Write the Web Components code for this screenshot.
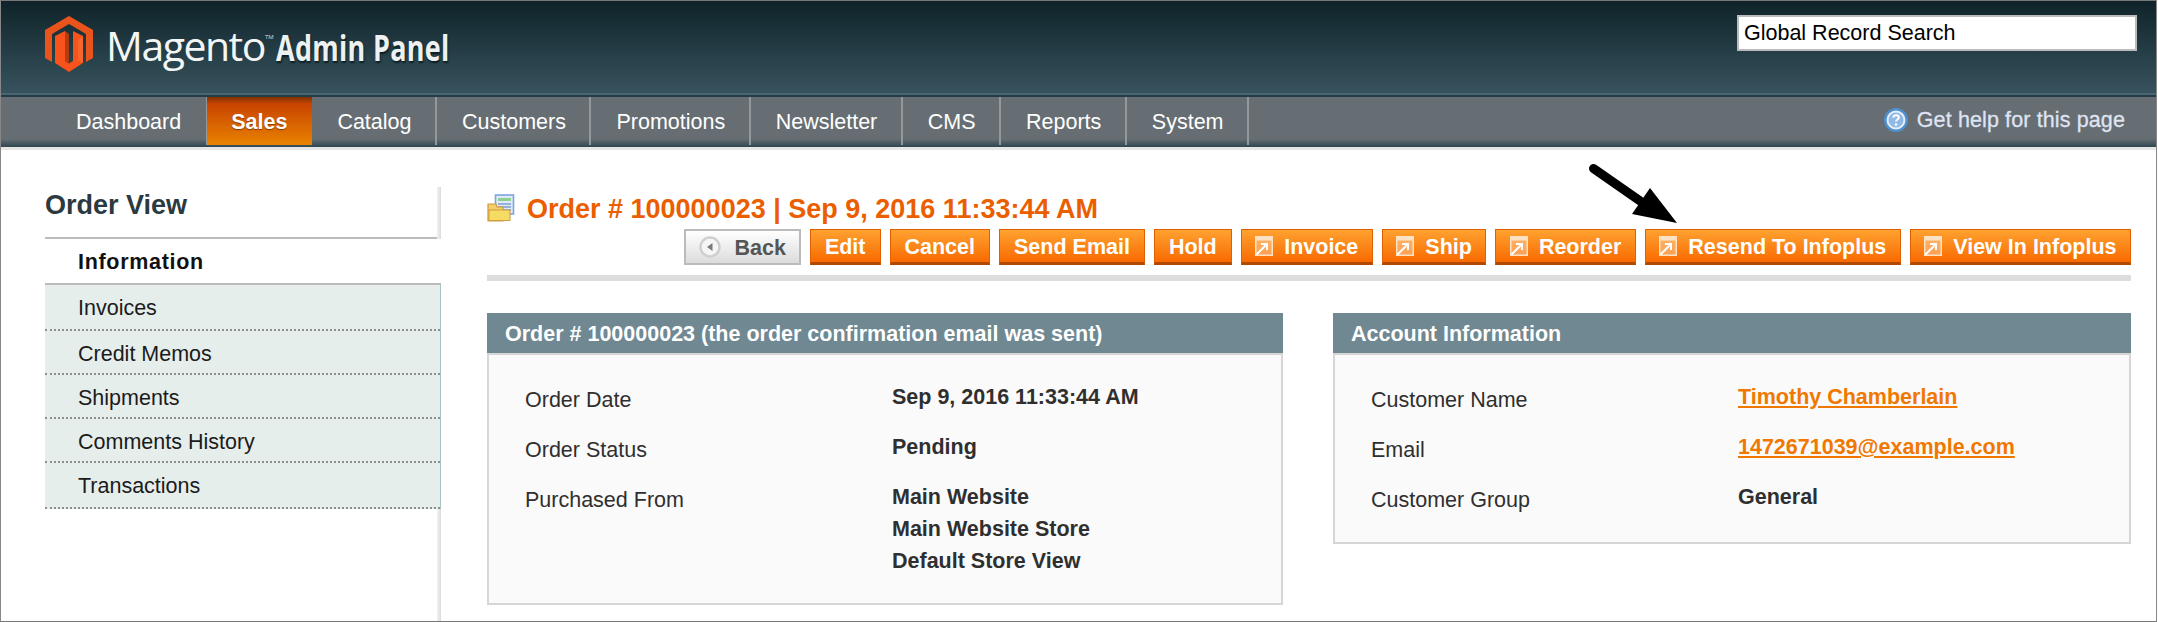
<!DOCTYPE html>
<html>
<head>
<meta charset="utf-8">
<title>Magento Admin Panel</title>
<style>
  html, body { margin: 0; padding: 0; background: #fff; }
  body { font-family: "Liberation Sans", Arial, sans-serif; font-size: 21.5px; }
</style>
</head>
<body>
<admin-shell>
  <admin-header slot="header"></admin-header>
  <admin-nav slot="nav">
    <nav-item>Dashboard</nav-item>
    <nav-item active>Sales</nav-item>
    <nav-item>Catalog</nav-item>
    <nav-item>Customers</nav-item>
    <nav-item>Promotions</nav-item>
    <nav-item>Newsletter</nav-item>
    <nav-item>CMS</nav-item>
    <nav-item>Reports</nav-item>
    <nav-item>System</nav-item>
  </admin-nav>
  <side-tabs slot="side" heading="Order View" active="Information" items="Invoices,Credit Memos,Shipments,Comments History,Transactions"></side-tabs>
  <order-head slot="main" heading="Order # 100000023 | Sep 9, 2016 11:33:44 AM">
    <mage-btn kind="back">Back</mage-btn>
    <mage-btn>Edit</mage-btn>
    <mage-btn>Cancel</mage-btn>
    <mage-btn>Send Email</mage-btn>
    <mage-btn>Hold</mage-btn>
    <mage-btn icon>Invoice</mage-btn>
    <mage-btn icon>Ship</mage-btn>
    <mage-btn icon>Reorder</mage-btn>
    <mage-btn icon>Resend To Infoplus</mage-btn>
    <mage-btn icon>View In Infoplus</mage-btn>
  </order-head>
  <box-grid slot="main">
    <info-box heading="Order # 100000023 (the order confirmation email was sent)">
      <info-row label="Order Date">Sep 9, 2016 11:33:44 AM</info-row>
      <info-row label="Order Status">Pending</info-row>
      <info-row label="Purchased From">Main Website<br>Main Website Store<br>Default Store View</info-row>
    </info-box>
    <info-box heading="Account Information">
      <info-row label="Customer Name"><a href="#" style="color:#f07800">Timothy Chamberlain</a></info-row>
      <info-row label="Email"><a href="#" style="color:#f07800">1472671039@example.com</a></info-row>
      <info-row label="Customer Group">General</info-row>
    </info-box>
  </box-grid>
</admin-shell>

<script>
class AdminShell extends HTMLElement {
  constructor() {
    super();
    this.attachShadow({ mode: 'open' });
  }

  connectedCallback() {
    this.shadowRoot.innerHTML = `
      <style>
        :host {
          display: block;
          position: relative;
          box-sizing: border-box;
          width: 2157px;
          height: 622px;
          overflow: hidden;
          background: #fff;
          border-top: 1px solid #777;
          border-left: 1px solid #888;
          border-right: 1px solid #888;
          border-bottom: 1px solid #777;
        }
        .content {
          display: grid;
          grid-template-columns: 396px 1644px;
          column-gap: 46px;
          padding: 37px 0 0 44px;
        }
        .arrow {
          position: absolute;
          left: 1580px;
          top: 155px;
        }
      </style>
      <slot name="header"></slot>
      <slot name="nav"></slot>
      <div class="content">
        <div><slot name="side"></slot></div>
        <div><slot name="main"></slot></div>
      </div>
      <svg class="arrow" width="110" height="80" viewBox="0 0 110 80">
        <path d="M12.5 12.5 L62 47" stroke="#000" stroke-width="9" stroke-linecap="round" fill="none"/>
        <path d="M96 67 L69 32 L51 58 Z" fill="#000"/>
      </svg>
    `;
  }
}

class AdminHeader extends HTMLElement {
  constructor() {
    super();
    this.attachShadow({ mode: 'open' });
  }

  connectedCallback() {
    this.shadowRoot.innerHTML = `
      <style>
        :host {
          display: flex;
          justify-content: space-between;
          height: 92px;
          background: linear-gradient(#0f2329, #37535e);
        }
        .brand {
          display: flex;
          align-items: flex-start;
          padding: 15px 0 0 44px;
        }
        .brand svg { display: block; margin-right: 13px; }
        .magento {
          margin-top: -7px;
          font-family: "Open Sans", sans-serif;
          font-size: 41px;
          line-height: 56px;
          letter-spacing: -1.5px;
          color: #f4f6f6;
        }
        .tm {
          font-size: 6px;
          vertical-align: 22px;
          letter-spacing: 0;
          margin-right: 2px;
          color: #d8dcdd;
        }
        .panel {
          display: inline-block;
          font-family: "Open Sans", sans-serif;
          font-weight: 700;
          font-size: 35px;
          line-height: 56px;
          color: #eef1f1;
          text-shadow: 1px 2px 2px #0c1d22;
          transform: scaleX(.77);
          transform-origin: left center;
          letter-spacing: .4px;
        }
        .search {
          box-sizing: border-box;
          width: 400px;
          height: 36px;
          margin: 14px 19px 0 0;
          padding: 0 5px;
          border: 2px solid #bbb;
          background: #fff;
          color: #000;
          line-height: 32px;
          font-size: 21.5px;
        }
      </style>
      <div class="brand">
        <svg width="48" height="56" viewBox="0 0 48 56">
          <path fill="#e9541c" d="M24 0 L48 14 V42 L41 46 V18 L24 8 L7 18 V46 L0 42 V14 Z"/>
          <path fill="#f7531a" d="M10 20 L20 15 V45 L24 47.5 L28 45 V15 L38 20 V47 L24 56 L10 47 Z"/>
          <path fill="#b53c12" d="M20 15 L24 18 V47.5 L20 45 Z"/>
          <path fill="#f78a5a" d="M38 20 L33 24 V44 L38 47 Z" opacity=".35"/>
        </svg>
        <div class="magento">Magento<span class="tm">TM</span><span class="panel">Admin Panel</span></div>
      </div>
      <div class="search">Global Record Search</div>
    `;
  }
}

class AdminNav extends HTMLElement {
  constructor() {
    super();
    this.attachShadow({ mode: 'open' });
  }

  connectedCallback() {
    this.shadowRoot.innerHTML = `
      <style>
        :host {
          display: flex;
          justify-content: space-between;
          box-sizing: border-box;
          height: 57px;
          padding: 4px 0 0 50px;
          background:
            linear-gradient(#4a6672, #4a6672) top / 100% 2px no-repeat,
            linear-gradient(#243c46, #243c46) 0 2px / 100% 2px no-repeat,
            linear-gradient(#666e73 0, #666e73 42px, #2f4650 50px, #2f4650 50px) 0 4px / 100% 50px no-repeat,
            #e6e6e6;
        }
        .items { display: flex; height: 48px; }
        .help {
          display: flex;
          align-items: center;
          gap: 9px;
          height: 46px;
          padding-right: 31px;
          color: #dfe3f3;
          font-size: 21.5px;
          letter-spacing: .12px;
          -webkit-text-stroke: .3px #dfe3f3;
        }
      </style>
      <div class="items"><slot></slot></div>
      <div class="help">
        <svg width="24" height="24" viewBox="0 0 24 24">
          <circle cx="12" cy="12" r="12" fill="#4f8fcf"/>
          <circle cx="12" cy="12" r="8.5" fill="#8fb9e6" stroke="#e4eefa" stroke-width="2"/>
          <path d="M9.3 9.6 C9.5 6.6 14.8 6.6 14.8 9.6 C14.8 11.6 12 11.4 12 13.6" fill="none" stroke="#fff" stroke-width="2"/>
          <circle cx="12" cy="16.6" r="1.3" fill="#fff"/>
        </svg>
        <span>Get help for this page</span>
      </div>
    `;
  }
}

class NavItem extends HTMLElement {
  constructor() {
    super();
    this.attachShadow({ mode: 'open' });
  }

  connectedCallback() {
    this.shadowRoot.innerHTML = `
      <style>
        :host {
          display: block;
          box-sizing: border-box;
          padding: 0 23.5px 0 25px;
          line-height: 50px;
          color: #fff;
          border-right: 2px solid #93989c;
        }
        :host(:first-child) { padding-right: 25px; }
        :host([active]) {
          font-weight: bold;
          padding: 0 25px 0 24px;
          margin-left: -1px;
          border-right: 0;
          background: linear-gradient(#7d3200 0, #c94400 7px, #e88300 100%);
          text-shadow: 0 1px 1px #8a3a00;
        }
      </style>
      <slot></slot>
    `;
  }
}

class SideTabs extends HTMLElement {
  constructor() {
    super();
    this.attachShadow({ mode: 'open' });
  }

  connectedCallback() {
    const items = (this.getAttribute('items') || '').split(',');
    this.shadowRoot.innerHTML = `
      <style>
        :host {
          display: block;
          position: relative;
          height: 434px;
        }
        :host::after {
          content: "";
          position: absolute;
          right: 0;
          top: 0;
          bottom: 0;
          width: 4px;
          background: linear-gradient(90deg, #f2f2f2, #dcdcdc);
        }
        h3 {
          box-sizing: border-box;
          height: 52px;
          margin: 0;
          padding-top: 3px;
          font-size: 27px;
          line-height: 30px;
          color: #2b3a40;
          border-bottom: 2px solid #bbb;
        }
        .active {
          position: relative;
          z-index: 1;
          box-sizing: border-box;
          height: 46px;
          padding-left: 33px;
          line-height: 46px;
          font-weight: bold;
          font-size: 21.5px;
          letter-spacing: .7px;
          color: #111;
          background: #fff;
          border-bottom: 2px solid #bbb;
        }
        ul {
          position: relative;
          z-index: 1;
          margin: 0;
          padding: 0;
          list-style: none;
          background: #e6eeec;
          border-right: 1px solid #a9c4c4;
        }
        li {
          box-sizing: border-box;
          height: 44px;
          padding-left: 33px;
          line-height: 46px;
          color: #1b1b1b;
          border-bottom: 2px dotted #8a8f8f;
        }
        li:first-child { height: 46px; }
        li:last-child { height: 46px; }
      </style>
      <h3>${this.getAttribute('heading')}</h3>
      <div class="active">${this.getAttribute('active')}</div>
      <ul>${items.map(i => `<li>${i}</li>`).join('')}</ul>
    `;
  }
}

class OrderHead extends HTMLElement {
  constructor() {
    super();
    this.attachShadow({ mode: 'open' });
  }

  connectedCallback() {
    this.shadowRoot.innerHTML = `
      <style>
        :host { display: block; }
        .title {
          display: flex;
          align-items: center;
          gap: 12px;
          height: 42px;
        }
        h3 {
          margin: 2px 0 0;
          font-size: 27px;
          color: #eb5e00;
        }
        svg { display: block; flex: none; }
        .actions {
          display: flex;
          justify-content: flex-end;
          gap: 9px;
          padding-bottom: 10px;
          border-bottom: 6px solid #ddd;
        }
      </style>
      <div class="title">
        <svg width="28" height="28" viewBox="0 0 28 28">
          <rect x="8.5" y="1" width="18" height="19" fill="#dfeaf8" stroke="#7ea6dc" stroke-width="1.6"/>
          <rect x="11" y="4" width="13" height="3" fill="#8fd08f"/>
          <path d="M11 10 H24 M11 13 H24 M11 16 H24" stroke="#7d9ed0" stroke-width="1.4"/>
          <path d="M1 10 H9 L10 13 H16 V27 H1 Z" fill="#f2cf6a" stroke="#d19b3e" stroke-width="1.2"/>
          <rect x="2" y="16" width="21" height="10.5" fill="#f6dc62" stroke="#d19b3e" stroke-width="1"/>
        </svg>
        <h3>${this.getAttribute('heading')}</h3>
      </div>
      <div class="actions"><slot></slot></div>
    `;
  }
}

class MageBtn extends HTMLElement {
  constructor() {
    super();
    this.attachShadow({ mode: 'open' });
  }

  connectedCallback() {
    const hasIcon = this.hasAttribute('icon');
    const isBack = this.getAttribute('kind') === 'back';
    let icon = '';
    if (hasIcon) {
      icon = `<svg width="18" height="20" viewBox="0 0 18 20">
        <rect x=".75" y=".75" width="16.5" height="18.5" fill="#ffffff" fill-opacity=".3" stroke="#fde3c4" stroke-width="1.5"/>
        <rect x="1" y="1" width="16" height="3.5" fill="#fde3c4"/>
        <path d="M1.5 18.5 L11 9 M6 8 H12 V14" fill="none" stroke="#fff" stroke-width="2"/>
      </svg>`;
    } else if (isBack) {
      icon = `<svg width="22" height="22" viewBox="0 0 22 22">
        <circle cx="11" cy="11" r="9.5" fill="#f6f6f6" stroke="#cfcfcf" stroke-width="2.4"/>
        <path d="M13.5 7 V15 L8 11 Z" fill="#7a7a7a"/>
      </svg>`;
    }
    this.shadowRoot.innerHTML = `
      <style>
        :host {
          display: block;
          flex: none;
          box-sizing: border-box;
          height: 36px;
          border: 1.5px solid #e25f00;
          border-bottom: 3px solid #b14a00;
          background: linear-gradient(#ffa230, #f96a00);
          color: #fff;
          font-weight: bold;
          font-size: 21.5px;
          line-height: 31px;
        }
        :host([kind="back"]) {
          border: 2px solid #bbb;
          background: linear-gradient(#fff, #dcdcdc);
          color: #555;
        }
        .in {
          display: flex;
          align-items: center;
          gap: ${isBack ? 13 : 11}px;
          height: 100%;
          padding: 0 ${isBack ? 13 : hasIcon ? 13.5 : 14}px;
        }
        span { position: relative; top: 1px; }
        svg { display: block; flex: none; }
      </style>
      <div class="in">${icon}<span><slot></slot></span></div>
    `;
  }
}

class BoxGrid extends HTMLElement {
  constructor() {
    super();
    this.attachShadow({ mode: 'open' });
  }

  connectedCallback() {
    this.shadowRoot.innerHTML = `
      <style>
        :host {
          display: grid;
          grid-template-columns: 796px 798px;
          column-gap: 50px;
          align-items: start;
          padding-top: 32px;
        }
      </style>
      <slot></slot>
    `;
  }
}

class InfoBox extends HTMLElement {
  constructor() {
    super();
    this.attachShadow({ mode: 'open' });
  }

  connectedCallback() {
    this.shadowRoot.innerHTML = `
      <style>
        :host { display: block; }
        h4 {
          box-sizing: border-box;
          height: 40px;
          margin: 0;
          padding-left: 18px;
          font-size: 21.5px;
          line-height: 42px;
          color: #fff;
          background: #6f8892;
        }
        .body {
          padding: 26px 36px 26px;
          background: #fafafa;
          border: 2px solid #d6d6d6;
        }
      </style>
      <h4>${this.getAttribute('heading')}</h4>
      <div class="body"><slot></slot></div>
    `;
  }
}

class InfoRow extends HTMLElement {
  constructor() {
    super();
    this.attachShadow({ mode: 'open' });
  }

  connectedCallback() {
    this.shadowRoot.innerHTML = `
      <style>
        :host {
          display: grid;
          grid-template-columns: 367px 1fr;
          padding-bottom: 15px;
          line-height: 32px;
        }
        :host(:last-child) { padding-bottom: 0; }
        .label { color: #2f2f2f; padding-top: 3px; }
        .value { color: #2f2f2f; font-weight: bold; }
      </style>
      <div class="label">${this.getAttribute('label')}</div>
      <div class="value"><slot></slot></div>
    `;
  }
}

customElements.define('admin-shell', AdminShell);
customElements.define('admin-header', AdminHeader);
customElements.define('admin-nav', AdminNav);
customElements.define('nav-item', NavItem);
customElements.define('side-tabs', SideTabs);
customElements.define('order-head', OrderHead);
customElements.define('mage-btn', MageBtn);
customElements.define('box-grid', BoxGrid);
customElements.define('info-box', InfoBox);
customElements.define('info-row', InfoRow);
</script>
</body>
</html>
